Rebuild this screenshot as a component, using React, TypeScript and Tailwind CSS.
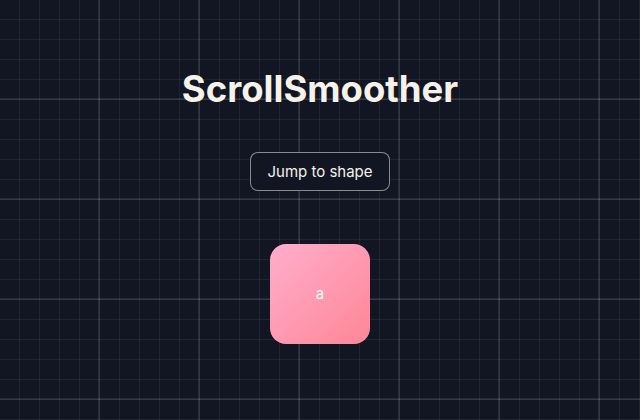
const gridBg = {
  backgroundImage:
    "linear-gradient(rgba(255,255,255,0.09) 2px, transparent 2px), linear-gradient(90deg, rgba(255,255,255,0.09) 2px, transparent 2px), linear-gradient(rgba(255,255,255,0.06) 1px, transparent 1px), linear-gradient(90deg, rgba(255,255,255,0.06) 1px, transparent 1px)",
  backgroundSize: "100px 100px, 100px 100px, 20px 20px, 20px 20px",
  backgroundPosition: "-2px -2px, -2px -2px, -1px -1px, -1px -1px",
};

export default function App() {
  return (
    <div
      className="min-h-[420px] w-full bg-[#121622] flex flex-col items-center font-['Inter',sans-serif]"
      style={gridBg}
    >
      <h1 className="mt-[69px] text-[36.5px] leading-[40px] font-bold text-[#f6f2ea]">
        ScrollSmoother
      </h1>

      <button className="mt-[43px] h-[39px] px-4 pt-px rounded-lg border border-white/50 bg-[#121622] text-[15px] text-[#f6f2ea]">
        Jump to shape
      </button>

      <div className="mt-[53px] w-[100px] h-[100px] rounded-2xl bg-gradient-to-br from-[#ffadcc] to-[#ff8696] flex items-center justify-center text-[15px] text-white">
        a
      </div>
    </div>
  );
}
